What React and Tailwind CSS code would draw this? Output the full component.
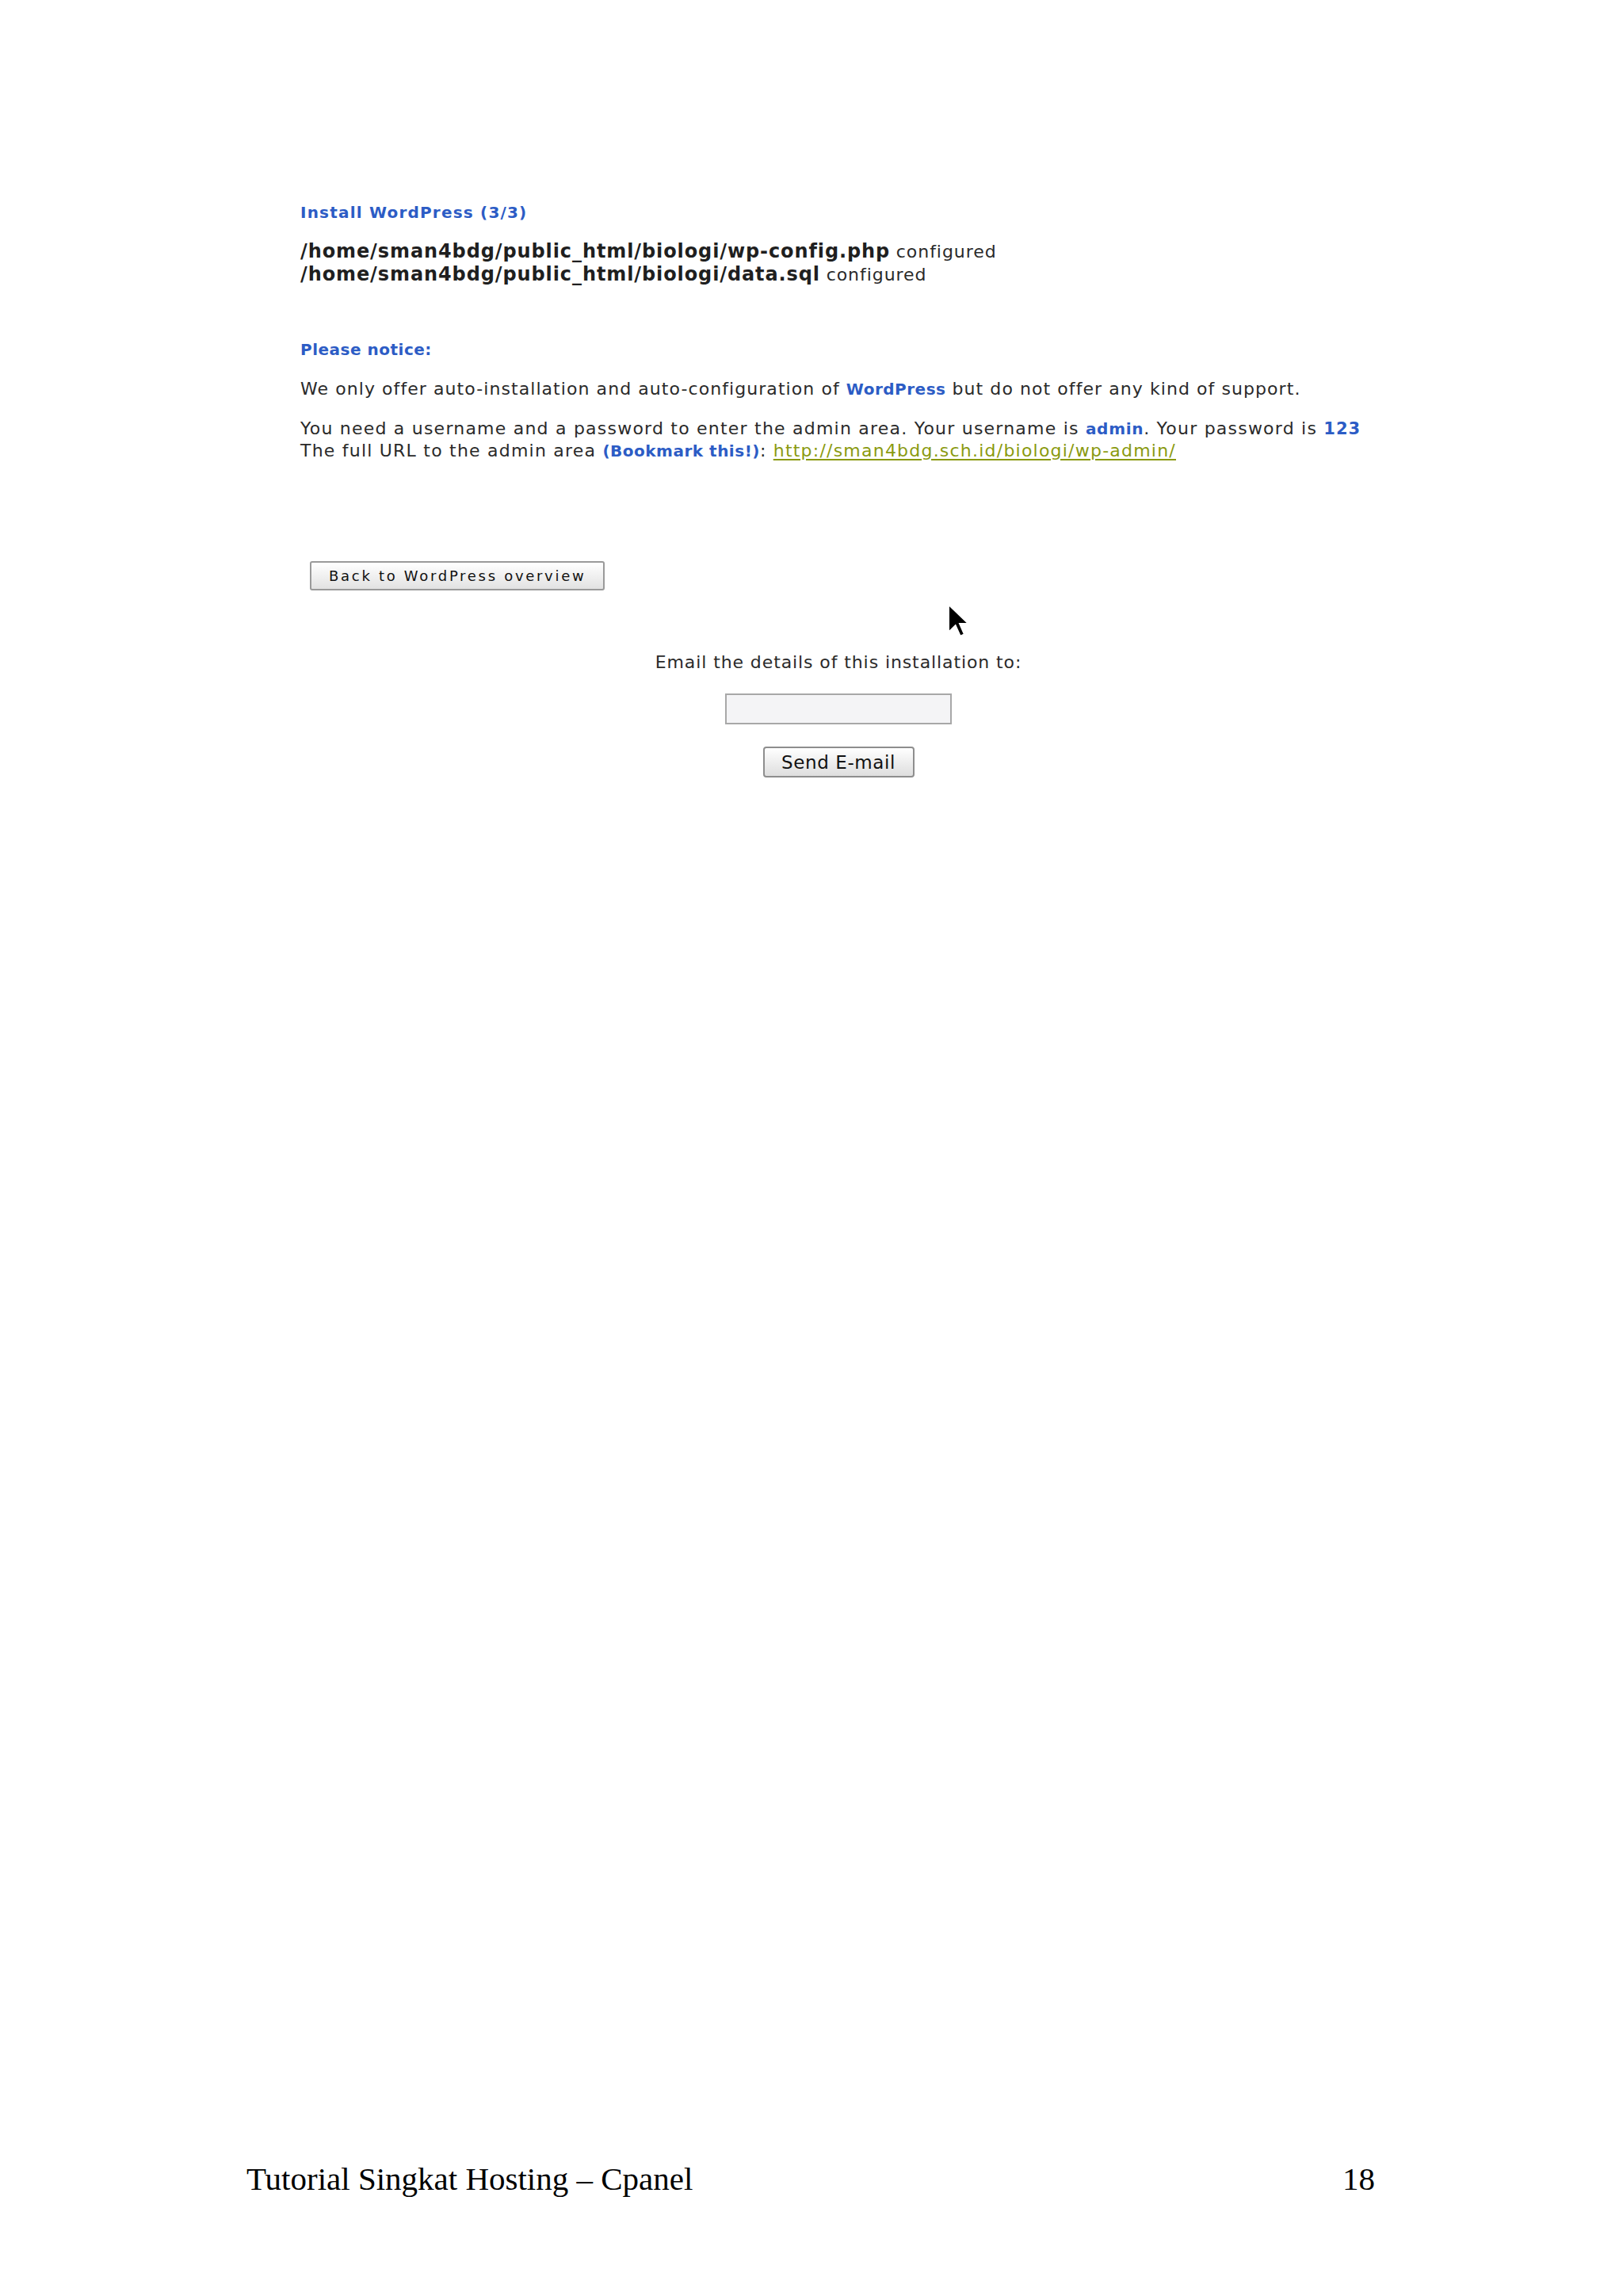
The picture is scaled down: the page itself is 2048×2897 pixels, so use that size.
import React from "react";

function Cursor() {
  return (
    <svg
      className="absolute left-[1196px] top-[762px]"
      width="28"
      height="43"
      viewBox="0 0 13 20"
    >
      <path
        d="M0.5 0.5 L0.5 16.5 L4.5 12.6 L7.3 18.8 L9.6 17.8 L6.9 11.6 L12 11.6 Z"
        fill="#000"
        stroke="#fff"
        strokeWidth="0.8"
        strokeLinejoin="miter"
      />
    </svg>
  );
}

export default function App() {
  const blue = "text-[#2c5cc5]";
  return (
    <div className="relative flex h-[2897px] w-[2048px] flex-col bg-white font-['DejaVu_Sans',sans-serif] text-[#262626]">
      <div className="ml-[372px] w-[1365px] pl-[7px] pt-[256px]">
        <h1 className="text-[20px] font-bold leading-[24px] tracking-[1.2px] text-[#2c5cc5]">
          Install WordPress (3/3)
        </h1>

        <div className="mt-[23px] text-[24px] leading-[28px] text-[#1f1f1f]">
          <div>
            <span className="font-bold tracking-[0.9px]">
              /home/sman4bdg/public_html/biologi/wp-config.php
            </span>{" "}
            <span className="text-[22px] tracking-[0.95px] text-[#2a2a2a]">configured</span>
          </div>
          <div>
            <span className="font-bold tracking-[0.9px]">
              /home/sman4bdg/public_html/biologi/data.sql
            </span>{" "}
            <span className="text-[22px] tracking-[0.95px] text-[#2a2a2a]">configured</span>
          </div>
        </div>

        <h2 className="mt-[68px] text-[20px] font-bold leading-[24px] tracking-[0.5px] text-[#2c5cc5]">
          Please notice:
        </h2>

        <p className="mt-[24px] text-[22px] leading-[28px] tracking-[1.07px] text-[#2a2a2a]">
          We only offer auto-installation and auto-configuration of{" "}
          <span className={`text-[20px] font-bold tracking-[0.5px] ${blue}`}>WordPress</span> but do not
          offer any kind of support.
        </p>

        <p className="mt-[22px] text-[22px] leading-[28px] tracking-[1.22px] text-[#2a2a2a]">
          You need a username and a password to enter the admin area. Your username is{" "}
          <span className={`text-[20px] font-bold tracking-[0.7px] ${blue}`}>admin</span>. Your password is{" "}
          <span className={`text-[21px] font-bold tracking-[1px] ${blue}`}>123</span>
          <br />
          The full URL to the admin area{" "}
          <span className={`text-[20px] font-bold tracking-[0.5px] ${blue}`}>(Bookmark this!)</span>:{" "}
          <a className="text-[#8a9a10] underline underline-offset-[3px]">
            http://sman4bdg.sch.id/biologi/wp-admin/
          </a>
        </p>

        <div className="mt-[125px] ml-[12px]">
          <button className="flex h-[37px] items-center rounded-[3px] border-2 border-[#9a9a9a] bg-gradient-to-b from-[#ffffff] to-[#e2e2e2] px-[22px] text-[18px] leading-[20px] tracking-[2.7px] text-[#111]">
            Back to WordPress overview
          </button>
        </div>

        <div className="mt-[77px] flex flex-col items-center">
          <div className="text-[22px] leading-[28px] tracking-[0.9px] text-[#2a2a2a]">
            Email the details of this installation to:
          </div>
          <input
            type="text"
            className="mt-[25px] h-[39px] w-[286px] border-2 border-[#a8a8a8] bg-[#f4f4f6] outline-none"
          />
          <button className="mt-[28px] flex h-[39px] w-[191px] items-center justify-center rounded-[4px] border-2 border-[#8e8e8e] bg-gradient-to-b from-[#ffffff] to-[#dedede] text-[23px] leading-[26px] tracking-[0.6px] text-[#111]">
            Send E-mail
          </button>
        </div>
      </div>

      <Cursor />

      <div className="mt-auto mb-[124px] ml-[311px] flex w-[1424px] justify-between font-['Liberation_Serif',serif] text-[41px] leading-[48px] text-black">
        <span>Tutorial Singkat Hosting – Cpanel</span>
        <span>18</span>
      </div>
    </div>
  );
}
